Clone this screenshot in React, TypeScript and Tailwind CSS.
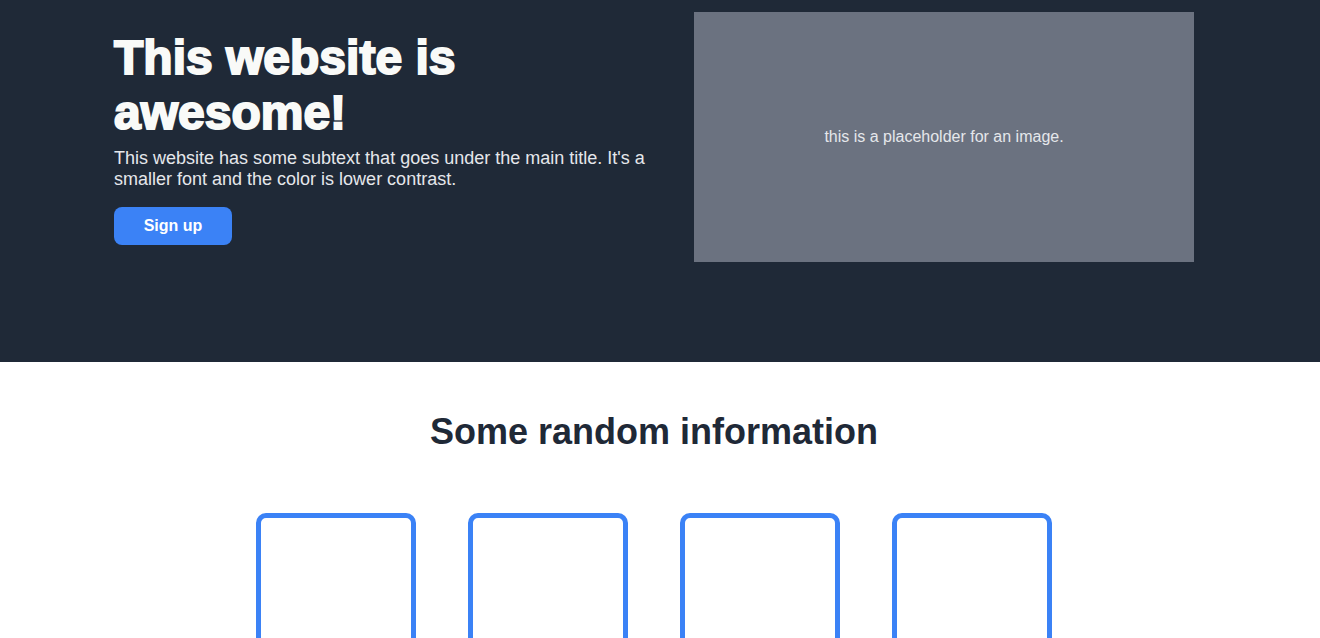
import React from "react";

const cards = [1, 2, 3, 4];

export default function App() {
  return (
    <div className="min-h-screen bg-white pr-[12px] font-['Liberation_Sans',Arial,sans-serif]">
      <header className="bg-[#1f2937] -mr-[12px] pr-[12px]">
        <div className="flex items-start pl-[114px] pt-[12px] pb-[100px]">
          <div className="w-[540px] pt-[18px]">
            <h1 className="text-[48px] leading-[55px] font-black text-[#f9faf8] [-webkit-text-stroke:2px_#f9faf8]">
              This website is awesome!
            </h1>
            <p className="mt-[8px] text-[18px] leading-[21px] text-[#e5e7eb]">
              This website has some subtext that goes under the main title. It's a smaller font and the color is lower contrast.
            </p>
            <button className="mt-[17px] h-[38px] w-[118px] rounded-lg bg-[#3b82f6] text-[16px] font-bold text-white">
              Sign up
            </button>
          </div>
          <div className="ml-[40px] flex h-[250px] w-[500px] items-center justify-center bg-[#6b7280] text-[16px] text-[#e5e7eb]">
            this is a placeholder for an image.
          </div>
        </div>
      </header>
      <section className="flex flex-col items-center pt-[48px]">
        <h2 className="text-[36px] leading-[44px] font-bold text-[#1f2937]">Some random information</h2>
        <div className="mt-[59px] flex gap-[52px]">
          {cards.map((c) => (
            <div key={c} className="h-[200px] w-[160px] rounded-[10px] border-[5px] border-[#3b82f6]" />
          ))}
        </div>
      </section>
    </div>
  );
}
